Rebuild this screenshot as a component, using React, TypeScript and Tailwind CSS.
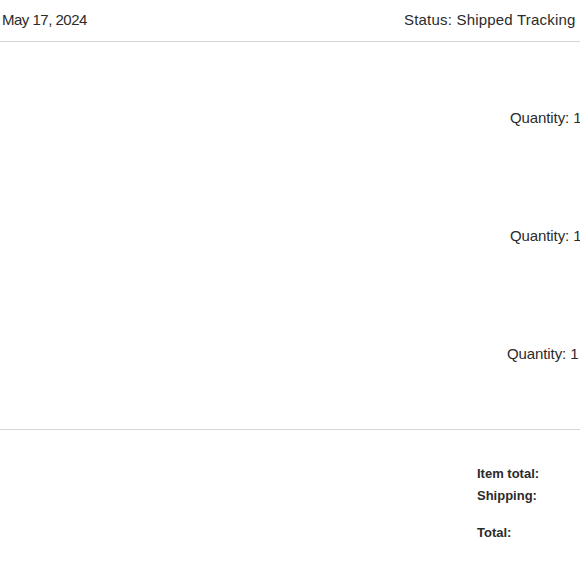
export default function App() {
  const items = [{ id: 1, qty: 1 }, { id: 2, qty: 1 }, { id: 3, qty: 1 }]
  return (
    <div className="w-[580px] h-[580px] overflow-hidden bg-white text-[#2b2b2b]" style={{ fontFamily: '"Liberation Sans", Arial, sans-serif' }}>
      <div className="w-[680px]">
        {/* Header */}
        <div className="flex items-center justify-between h-[42px] border-b border-[#d6d6d6] pl-[2px] text-[15px]">
          <span className="tracking-[-0.5px]">May 17, 2024</span>
          <span className="w-[276px] whitespace-nowrap tracking-[0.2px]">Status: Shipped Tracking</span>
        </div>

        {/* Items */}
        <div className="flex flex-col gap-[98px] pt-[66px] pb-[65px] border-b border-[#d6d6d6]">
          {items.map((it, i) => (
            <div key={it.id} className="flex justify-end h-[20px] items-center text-[15px] tracking-[-0.1px]">
              <span className={i === 2 ? 'w-[173px]' : 'w-[170px]'}>Quantity: {it.qty}</span>
            </div>
          ))}
        </div>

        {/* Totals */}
        <div className="flex justify-end pt-[33px] text-[13px] font-bold">
          <div className="w-[203px] flex flex-col">
            <span className="h-[22px] leading-[22px]">Item total:</span>
            <span className="h-[22px] leading-[22px]">Shipping:</span>
            <span className="h-[22px] leading-[22px] mt-[15px]">Total:</span>
          </div>
        </div>
      </div>
    </div>
  )
}
